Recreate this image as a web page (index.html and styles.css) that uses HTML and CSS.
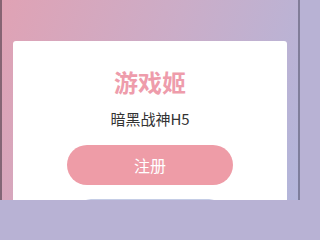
FILE: index.html
```html
<!DOCTYPE html>
<html lang="zh">
<head>
<meta charset="utf-8">
<link rel="stylesheet" href="styles.css">
</head>
<body>
<div class="page">
  <div class="card">
    <h1 class="title">游戏姬</h1>
    <p class="subtitle">暗黑战神H5</p>
    <button class="btn btn-primary">注册</button>
    <div class="btn btn-secondary" aria-hidden="true"></div>
  </div>
</div>
</body>
</html>
```
FILE: styles.css
```css
html, body {
  margin: 0;
  padding: 0;
  overflow: hidden;
}
html {
  background: #b8b2d4;
}
body {
  font-family: "Noto Sans CJK SC", "Noto Sans", sans-serif;
}
.page {
  width: 300px;
  height: 200px;
  overflow: hidden;
  box-sizing: border-box;
  padding: 41px 13px 0;
  display: flex;
  flex-direction: column;
  background: linear-gradient(110deg, #e0a2b4 0%, #cbadc8 50%, #b2b6db 100%);
  box-shadow: inset 2px 0 0 rgba(60, 50, 60, 0.55), inset -2px 0 0 rgba(60, 60, 80, 0.45);
}
.card {
  flex: 1;
  min-height: 0;
  overflow: hidden;
  background: #fff;
  border-radius: 3px 3px 0 0;
  padding-top: 25px;
  display: flex;
  flex-direction: column;
  align-items: center;
}
.title {
  margin: 0;
  font-size: 24px;
  line-height: 32px;
  font-weight: 700;
  color: #ee9cab;
  flex-shrink: 0;
}
.subtitle {
  margin: 10px 0 0;
  font-size: 15px;
  line-height: 22px;
  color: #333;
  flex-shrink: 0;
}
.btn {
  flex-shrink: 0;
  box-sizing: border-box;
  width: 166px;
  height: 40px;
  border-radius: 20px;
  font-family: inherit;
  font-size: 16px;
  border: none;
  padding: 0;
}
.btn-primary {
  margin-top: 15px;
  background: #ee9ca7;
  color: #fff;
}
.btn-secondary {
  margin-top: 14px;
  width: 142px;
  background: #fff;
  border: 1px solid #c5cde6;
  border-radius: 12px;
}
```
